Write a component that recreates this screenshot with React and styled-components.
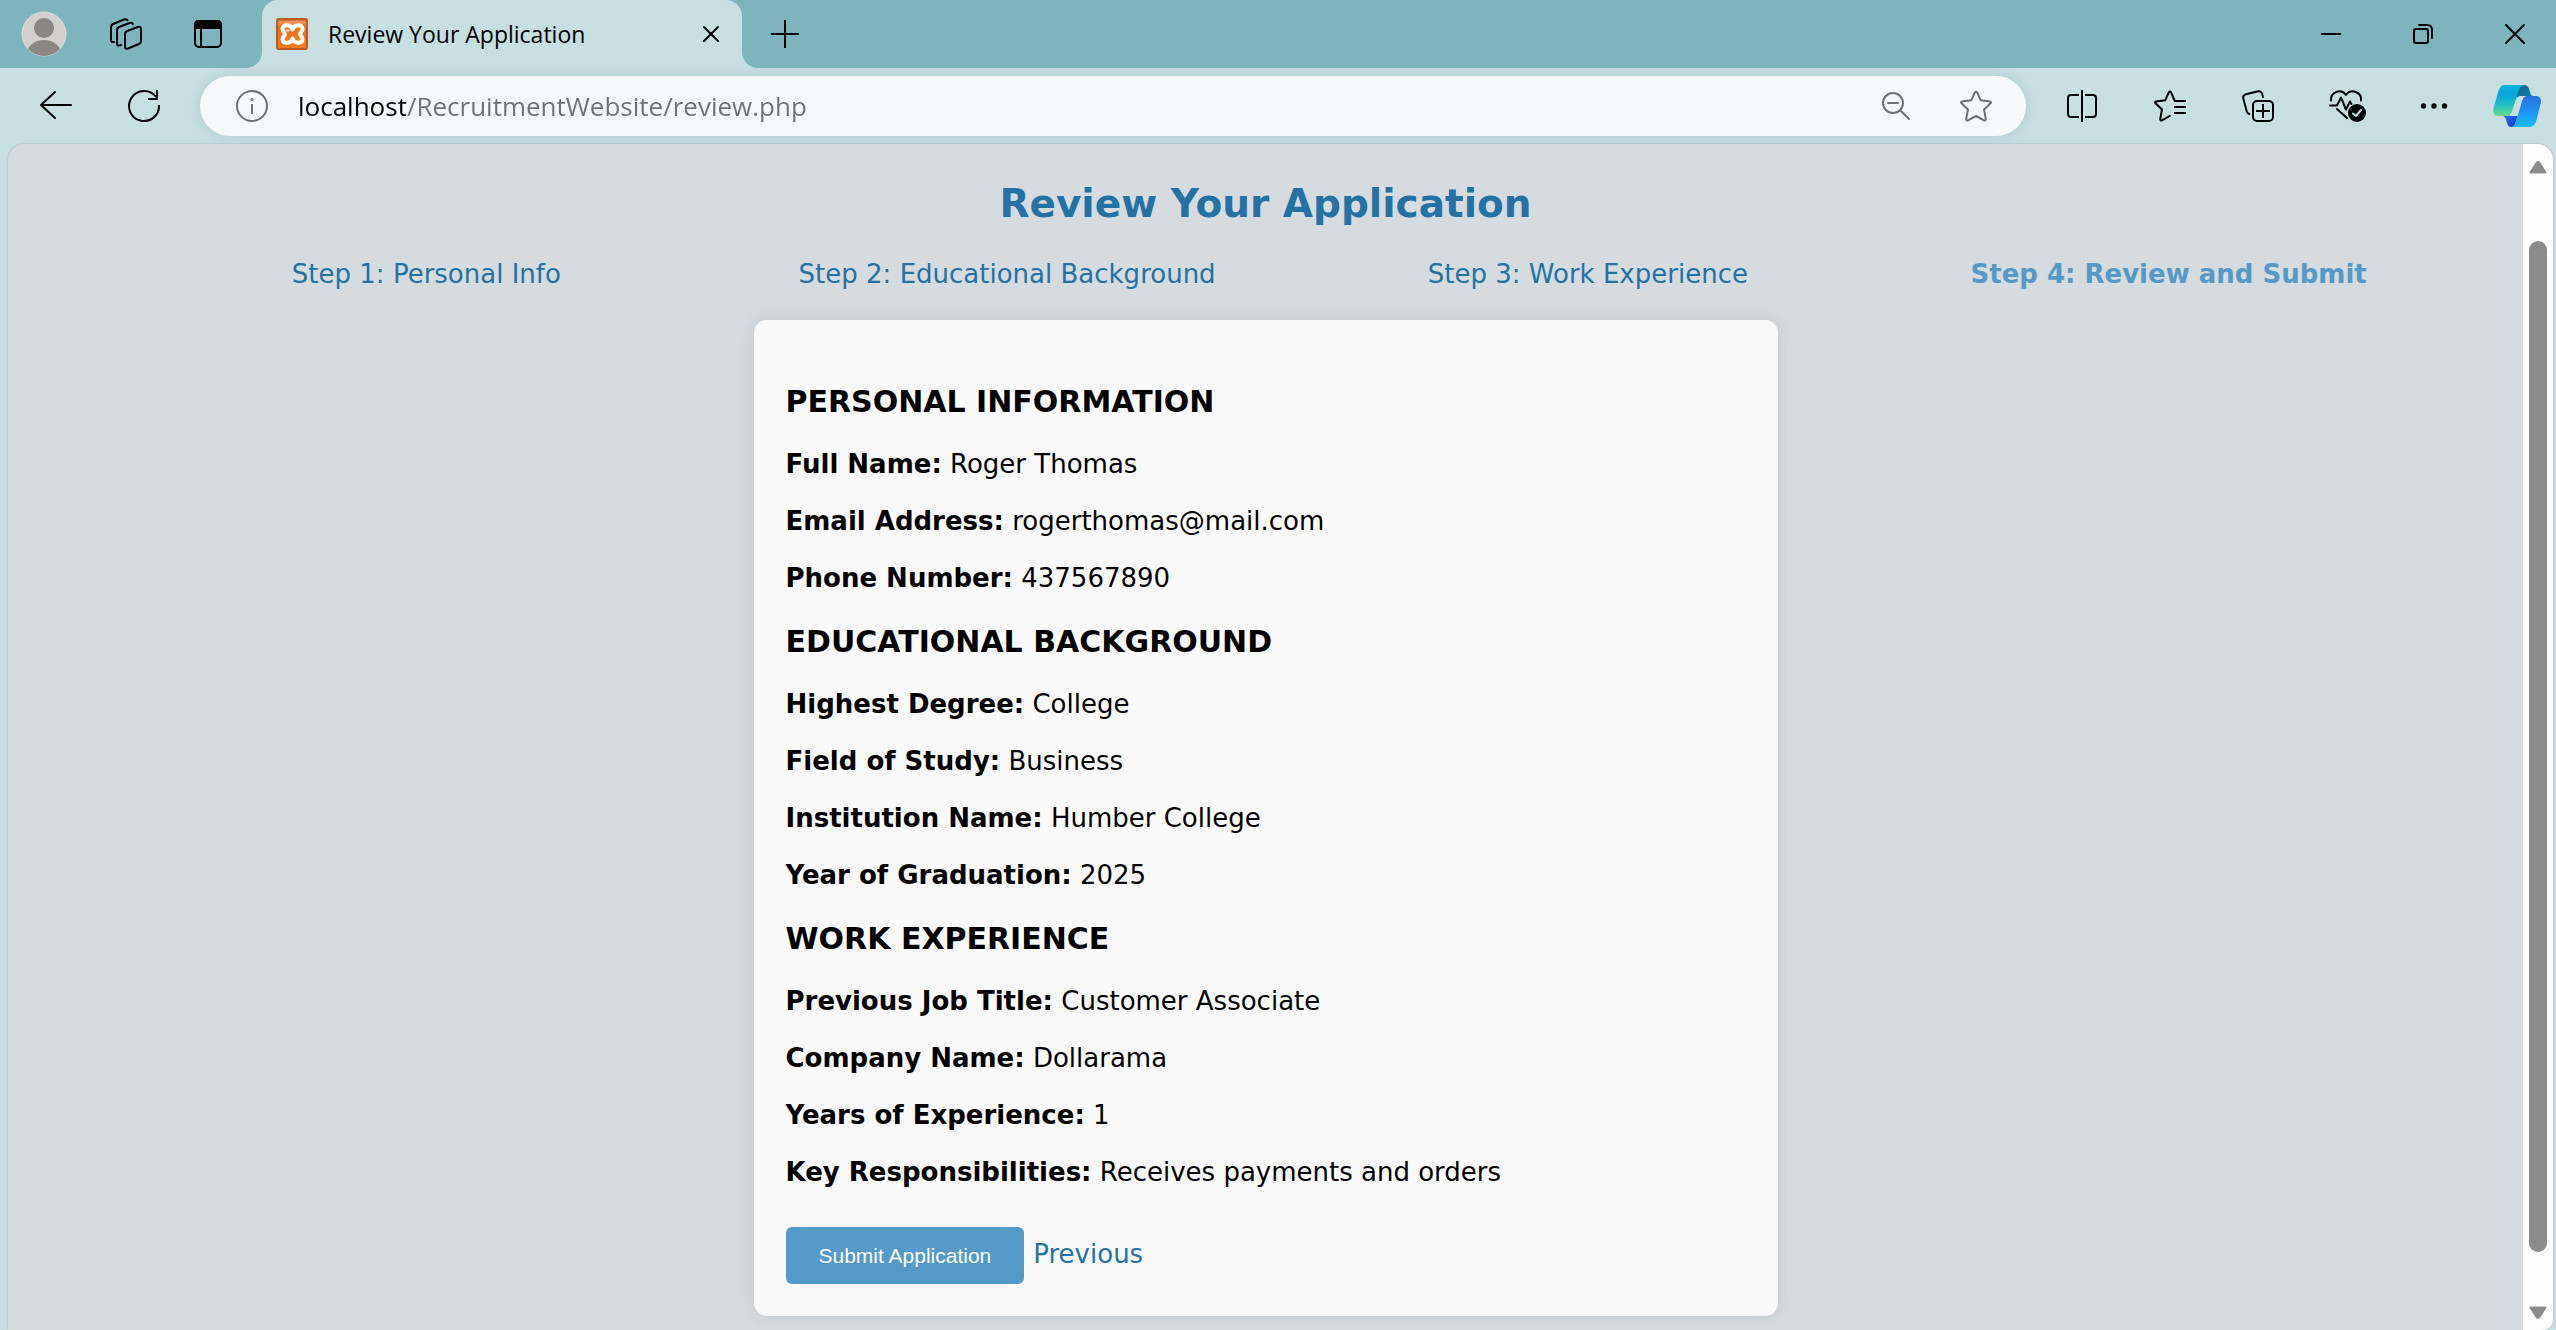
import React from "react";
import styled, { createGlobalStyle } from "styled-components";

const GlobalStyle = createGlobalStyle`
  *, *::before, *::after { box-sizing: border-box; }
  body { margin: 0; background: #c8dfe2; }
`;

const uiFont = `"Open Sans", "Noto Sans", sans-serif`;

const Shell = styled.div`
  display: flex;
  flex-direction: column;
  min-height: 100vh;
  background: #c8dfe2;
`;

const TabStrip = styled.header`
  display: flex;
  height: 68px;
`;

const StripStart = styled.div`
  display: flex;
  width: 262px;
  padding-left: 3px;
  background: #7eb4be;
  border-bottom-right-radius: 16px;
`;

const StripEnd = styled.div`
  display: flex;
  flex: 1;
  justify-content: space-between;
  background: #7eb4be;
  border-bottom-left-radius: 16px;
`;

const WindowControls = styled.div`
  display: flex;
  gap: 10px;
`;

const TabWell = styled.div`
  width: 480px;
  background: #7eb4be;
`;

const Tab = styled.div`
  display: flex;
  align-items: center;
  height: 100%;
  padding-left: 14px;
  background: #c8dfe2;
  border-radius: 16px 16px 0 0;
`;

const TabTitle = styled.span`
  flex: 1;
  padding-left: 20px;
  font: 400 23px/32px ${uiFont};
  color: #000;
  white-space: nowrap;
`;

const IconButton = styled.button`
  display: flex;
  flex: none;
  align-items: center;
  justify-content: center;
  width: ${(p) => p.$width || 82}px;
  align-self: stretch;
  padding: 0;
  border: 0;
  background: transparent;
  color: ${(p) => (p.$muted ? "#6f7173" : "#000")};
`;

const Svg = styled.svg`
  display: block;
  flex: none;
  overflow: visible;
  fill: none;
  stroke: currentColor;
  stroke-width: 2;
  stroke-linecap: round;
  stroke-linejoin: round;
`;

const Toolbar = styled.div`
  display: flex;
  height: 76px;
  padding: 8px 0 8px 12px;
`;

const AddressBar = styled.div`
  display: flex;
  flex: 1;
  margin: 0 12px;
  padding: 0 10px 0 8px;
  border-radius: 30px;
  background: #f5f9fa;
  box-shadow: 0 0 12px rgba(60, 110, 120, 0.2);
`;

const AddressInput = styled.input`
  flex: 1;
  min-width: 0;
  padding: 0 0 0 2px;
  border: 0;
  outline: 0;
  font: 400 26px/36px ${uiFont};
  color: transparent;
  background: linear-gradient(to right, #000 110px, #6f7173 110px);
  background-clip: text;
`;

const Viewport = styled.div`
  display: flex;
  flex: 1;
  margin: 0 3px 0 8px;
  border-radius: 16px 16px 10px 0;
  overflow: hidden;
  background: #d6dbdf;
  box-shadow: 0 0 2px rgba(60, 110, 120, 0.5);
`;

const Page = styled.main`
  flex: 1;
  padding: 36px 64px 14px;
  font: 400 26px/31px "DejaVu Sans", Verdana, sans-serif;
  color: #000;
`;

const Title = styled.h1`
  margin: 0;
  font-size: 39px;
  line-height: 47px;
  text-align: center;
  color: #2471a3;
`;

const Steps = styled.ul`
  display: flex;
  margin: 32px 0 30px;
  padding: 0 0 0 64px;
  list-style: none;
`;

const Step = styled.li`
  flex: 1;
  text-align: center;
`;

const PageLink = styled.a`
  color: ${(p) => (p.$current ? "#5499c7" : "#2471a3")};
  font-weight: ${(p) => (p.$current ? 700 : 400)};
  text-decoration: none;
`;

const Card = styled.form`
  max-width: 1024px;
  margin: 0 auto;
  padding: 63px 32px 32px;
  border-radius: 13px;
  background: #f9f9f9;
  box-shadow: 0 0 16px rgba(0, 0, 0, 0.1);
`;

const SectionTitle = styled.h2`
  margin: 0 0 29px;
  font-size: 30px;
  line-height: 37px;
  text-transform: uppercase;

  section + section > & {
    margin-top: 29px;
  }
`;

const Field = styled.p`
  margin: 0;

  & + & {
    margin-top: 26px;
  }
`;

const Actions = styled.div`
  display: flex;
  align-items: baseline;
  gap: 9px;
  margin-top: 39px;
`;

const SubmitButton = styled.button`
  padding: 16px 33px;
  border: 0;
  border-radius: 6px;
  background: #5499c7;
  color: #fff;
  font: 400 21px/25px Arial, "Liberation Sans", sans-serif;
`;

const Scrollbar = styled.div`
  display: flex;
  flex-direction: column;
  align-items: center;
  width: 30px;
  padding: 16px 0 10px;
  background: #fcfcfc;
`;

const Thumb = styled.div`
  flex: 1;
  width: 18px;
  margin: 67px 0 54px;
  border-radius: 9px;
  background: #8b8b8b;
`;

const steps = [
  "Step 1: Personal Info",
  "Step 2: Educational Background",
  "Step 3: Work Experience",
  "Step 4: Review and Submit",
];

const sections = [
  {
    title: "Personal Information",
    fields: [
      ["Full Name:", "Roger Thomas"],
      ["Email Address:", "rogerthomas@mail.com"],
      ["Phone Number:", "437567890"],
    ],
  },
  {
    title: "Educational Background",
    fields: [
      ["Highest Degree:", "College"],
      ["Field of Study:", "Business"],
      ["Institution Name:", "Humber College"],
      ["Year of Graduation:", "2025"],
    ],
  },
  {
    title: "Work Experience",
    fields: [
      ["Previous Job Title:", "Customer Associate"],
      ["Company Name:", "Dollarama"],
      ["Years of Experience:", "1"],
      ["Key Responsibilities:", "Receives payments and orders"],
    ],
  },
];

function Icon({ w = 32, h = 32, children, ...rest }) {
  return (
    <Svg width={w} height={h} viewBox={`0 0 ${w} ${h}`} aria-hidden="true" {...rest}>
      {children}
    </Svg>
  );
}

const AvatarIcon = () => (
  <Icon w={46} h={46} stroke="none">
    <clipPath id="avatar"><circle cx="23" cy="23" r="22" /></clipPath>
    <circle cx="23" cy="23" r="22" fill="#d2d0ce" style={{ stroke: "#dedcda", strokeWidth: 1 }} />
    <g clipPath="url(#avatar)" fill="#8a8684" style={{ stroke: "none" }}>
      <circle cx="23" cy="17" r="10" />
      <ellipse cx="23" cy="43" rx="17" ry="14" />
    </g>
  </Icon>
);

const WorkspacesIcon = () => (
  <Icon>
    <path d="M17 13 28 9q3-1 3 2v12q0 2-2 3l-11 4.500q-3 1-3-2V16q0-2 2-3z" />
    <path d="M11 27l-1 .4q-3 .8-3-2V12q0-2 2-3l10.500-4q2.500-.8 3.500 1" />
    <path d="M4 24q-3 .6-3-2V9q0-2 2-3L14 1.500q2.500-.9 3.500 .8" />
  </Icon>
);

const TabActionsIcon = () => (
  <Icon w={28} h={28}>
    <rect x="1" y="1" width="26" height="26" rx="4" />
    <path d="M1 8V5q0-4 4-4h18q4 0 4 4v3z" fill="currentColor" strokeLinejoin="miter" />
    <path d="M7 8v19" />
  </Icon>
);

const XamppIcon = () => (
  <Icon>
    <defs>
      <linearGradient id="xampp" x1="0" y1="0" x2="0" y2="1">
        <stop offset="0" stopColor="#b85a1d" />
        <stop offset=".1" stopColor="#f3935a" />
        <stop offset=".18" stopColor="#f08a4c" />
        <stop offset=".22" stopColor="#f07020" />
        <stop offset="1" stopColor="#fb7a24" />
      </linearGradient>
    </defs>
    <rect x="1" y="1" width="30" height="30" rx="2" fill="url(#xampp)" style={{ stroke: "#b95b1e" }} />
    <path
      d="M16.500 11.500C15 6 6.500 6 6.500 11c0 3 2.500 3.500 2.500 5.200S6.500 18.500 6.500 21.500C6.500 26 15 26 16.500 20.500 18 26 26.500 26 26.500 21.500c0-3-2.500-3.500-2.500-5.300s2.500-2.200 2.500-5.200C26.500 6 18 6 16.500 11.500z"
      style={{ stroke: "#fff", strokeWidth: 4 }}
    />
    <path d="M11 12.500h1.500" style={{ stroke: "#fff", strokeWidth: 2 }} />
  </Icon>
);

const CloseTabIcon = () => (
  <Icon w={16} h={16}><path d="M1 1l14 14M15 1 1 15" /></Icon>
);
const PlusIcon = () => (
  <Icon w={28} h={28}><path d="M14 0v28M0 14h28" strokeLinecap="butt" /></Icon>
);
const MinimizeIcon = () => (
  <Icon w={20} h={20}><path d="M0 10h20" strokeLinecap="butt" /></Icon>
);
const RestoreIcon = () => (
  <Icon w={20} h={20}>
    <rect x="1" y="5" width="14" height="14" rx="2" />
    <path d="M6 1h8q5 0 5 5v8" />
  </Icon>
);
const CloseWindowIcon = () => (
  <Icon w={20} h={20}><path d="M1 1l18 18M19 1 1 19" /></Icon>
);
const BackIcon = () => (
  <Icon><path d="M31 15H1M15 2 1 15l14 13" /></Icon>
);
const RefreshIcon = () => (
  <Icon>
    <path d="M31 15A15 15 0 1 1 28 7" strokeLinecap="butt" />
    <path d="M29 0v9h-9" strokeLinecap="butt" strokeLinejoin="miter" />
  </Icon>
);
const InfoIcon = () => (
  <Icon>
    <circle cx="16" cy="16" r="15" />
    <path d="M16 14v10" strokeLinecap="butt" />
    <circle cx="16" cy="9.500" r=".6" />
  </Icon>
);
const ZoomOutIcon = () => (
  <Icon w={28} h={28}>
    <circle cx="11" cy="11" r="10" />
    <path d="M6 11h10M18.500 18.500 27 27" />
  </Icon>
);
const StarIcon = () => (
  <Icon>
    <path d="M16 1.500q.8 0 1.200 1l3.600 7.800 9.200 1.200q1.600.4.500 1.800L24 19.500l1.800 9.500q0 2-1.800 1.300l-8-4.300-8 4.300q-1.800.7-1.800-1.300L8 19.500l-6.500-6.200Q.4 11.900 2 11.500l9.200-1.200 3.600-7.800q.4-1 1.200-1z" />
  </Icon>
);
const SplitIcon = () => (
  <Icon>
    <path d="M16 0v32M13 5H5Q2 5 2 8v16q0 3 3 3h8M19 5h8q3 0 3 3v16q0 3-3 3h-8" strokeLinecap="butt" />
  </Icon>
);
const FavoritesIcon = () => (
  <Icon>
    <path d="M16.500 25.500 8 30.300q-1.800.7-1.800-1.300L8 19.500l-6.500-6.200Q.4 11.900 2 11.500l9.200-1.200 3.600-7.800q1.200-2 2.400 0l3.600 8.500H32M20 17h12M20 23h12" strokeLinecap="butt" />
  </Icon>
);
const CollectionsIcon = () => (
  <Icon>
    <rect x="11" y="11" width="20" height="20" rx="4" />
    <path d="M21 14v14M14 21h14" strokeLinecap="butt" />
    <path d="M21 7l-.8-3q-.9-3.300-4-2.700L4 4.300Q.5 5.500 1.300 8.500l3.500 13q.7 2 2.700 2.500" />
  </Icon>
);
const HealthIcon = () => (
  <Icon w={32} h={32}>
    <path d="M1 10.500C.5 2 11 -2 16 5 21-2 32 2 31 10.500M7 19l10 9M0 15.500h7l4-8 5 12 4-8 1.500 2.500" />
    <circle cx="27" cy="23" r="8" fill="currentColor" />
    <path d="M23 23.500l3 2.500 5-6" style={{ stroke: "#c8dfe2" }} />
  </Icon>
);
const MoreIcon = () => (
  <Icon w={28} h={6}>
    <g fill="currentColor" style={{ stroke: "none" }}>
      <circle cx="3.500" cy="3" r="2.700" />
      <circle cx="14" cy="3" r="2.700" />
      <circle cx="24.500" cy="3" r="2.700" />
    </g>
  </Icon>
);
const CopilotIcon = () => (
  <Icon w={48} h={42}>
    <defs>
      <linearGradient id="cpLeft" x1="0" y1="0" x2="0" y2="1">
        <stop offset="0" stopColor="#0bb8e0" />
        <stop offset=".3" stopColor="#08a4dc" />
        <stop offset=".65" stopColor="#22bfc4" />
        <stop offset="1" stopColor="#69dd8b" />
      </linearGradient>
      <linearGradient id="cpFold" x1="0" y1="0" x2="1" y2="1">
        <stop offset="0" stopColor="#0a5f7f" />
        <stop offset="1" stopColor="#0b89b5" />
      </linearGradient>
      <linearGradient id="cpRight" x1="0" y1="0" x2="0" y2="1">
        <stop offset="0" stopColor="#2b6fdc" />
        <stop offset=".6" stopColor="#1d9bfa" />
        <stop offset="1" stopColor="#15bdf0" />
      </linearGradient>
      <linearGradient id="cpBase" x1="0" y1="0" x2="1" y2="1">
        <stop offset="0" stopColor="#2376ee" />
        <stop offset="1" stopColor="#1532cd" />
      </linearGradient>
    </defs>
    <g style={{ stroke: "none" }}>
      <path d="M22 13 27 0h4c4 0 5 3 6 7 .7 2.500 1.500 4 3.500 4H30z" fill="url(#cpFold)" />
      <path d="M25 30 21 42h-3c-3 0-3.500-3-4.500-6-.9-3-1.500-4-3.500-5z" fill="url(#cpBase)" />
      <path d="M12 0h19c-3 .5-4.500 2.500-5.500 6l-5 17c-1.500 5-3 8-8 8H5c-4 0-5.500-3-4.500-7.500L5 7.500C6.500 2.500 8 0 12 0z" fill="url(#cpLeft)" />
      <path d="M34 11h9c4 0 5.500 3 4.800 7l-4.300 17c-1.500 5-3.500 7-7.500 7H18c3-.5 4-3 5-6l5-17c1.500-5 2.500-8 6-8z" fill="url(#cpRight)" />
      <path d="M33 11h-5c-3 0-4.500 2-5.500 5l-3 9.500c-.8 3-1.700 4.800-3.500 5.500h8.500L29 16c.8-2.700 2-4.600 4-5z" fill="#c8dfe2" />
    </g>
  </Icon>
);
const ArrowIcon = ({ down }) => (
  <Icon w={18} h={14}>
    <path
      d={down ? "M1.500 1.500h15L10.500 11q-1.500 2-3 0z" : "M1.500 12.500h15L10.500 3q-1.500-2-3 0z"}
      fill="#8b8b8b"
      style={{ stroke: "#8b8b8b" }}
    />
  </Icon>
);

export default function App() {
  return (
    <>
      <GlobalStyle />
      <Shell>
        <TabStrip>
          <StripStart>
            <IconButton aria-label="Profile"><AvatarIcon /></IconButton>
            <IconButton aria-label="Workspaces"><WorkspacesIcon /></IconButton>
            <IconButton aria-label="Tab actions"><TabActionsIcon /></IconButton>
          </StripStart>
          <TabWell>
            <Tab>
              <XamppIcon />
              <TabTitle>Review Your Application</TabTitle>
              <IconButton $width={62} aria-label="Close tab"><CloseTabIcon /></IconButton>
            </Tab>
          </TabWell>
          <StripEnd>
            <IconButton $width={86} aria-label="New tab"><PlusIcon /></IconButton>
            <WindowControls>
              <IconButton aria-label="Minimize"><MinimizeIcon /></IconButton>
              <IconButton aria-label="Restore"><RestoreIcon /></IconButton>
              <IconButton aria-label="Close window"><CloseWindowIcon /></IconButton>
            </WindowControls>
          </StripEnd>
        </TabStrip>

        <Toolbar>
          <IconButton $width={88} aria-label="Back"><BackIcon /></IconButton>
          <IconButton $width={88} aria-label="Refresh"><RefreshIcon /></IconButton>
          <AddressBar>
            <IconButton $width={88} $muted aria-label="Site information"><InfoIcon /></IconButton>
            <AddressInput
              type="text"
              aria-label="Address"
              defaultValue="localhost/RecruitmentWebsite/review.php"
            />
            <IconButton $width={80} $muted aria-label="Zoom out"><ZoomOutIcon /></IconButton>
            <IconButton $width={80} $muted aria-label="Add to favorites"><StarIcon /></IconButton>
          </AddressBar>
          <IconButton $width={88} aria-label="Split screen"><SplitIcon /></IconButton>
          <IconButton $width={88} aria-label="Favorites"><FavoritesIcon /></IconButton>
          <IconButton $width={88} aria-label="Collections"><CollectionsIcon /></IconButton>
          <IconButton $width={88} aria-label="Browser essentials"><HealthIcon /></IconButton>
          <IconButton $width={88} aria-label="Settings and more"><MoreIcon /></IconButton>
          <IconButton $width={78} aria-label="Copilot"><CopilotIcon /></IconButton>
        </Toolbar>

        <Viewport>
          <Page>
            <Title>Review Your Application</Title>
            <nav>
              <Steps>
                {steps.map((label, i) => (
                  <Step key={label}>
                    <PageLink href="#" $current={i === 3}>{label}</PageLink>
                  </Step>
                ))}
              </Steps>
            </nav>
            <Card onSubmit={(e) => e.preventDefault()}>
              {sections.map((section) => (
                <section key={section.title}>
                  <SectionTitle>{section.title}</SectionTitle>
                  {section.fields.map(([label, value]) => (
                    <Field key={label}>
                      <strong>{label}</strong> {value}
                    </Field>
                  ))}
                </section>
              ))}
              <Actions>
                <SubmitButton type="submit">Submit Application</SubmitButton>
                <PageLink href="#">Previous</PageLink>
              </Actions>
            </Card>
          </Page>
          <Scrollbar>
            <ArrowIcon />
            <Thumb />
            <ArrowIcon down />
          </Scrollbar>
        </Viewport>
      </Shell>
    </>
  );
}
